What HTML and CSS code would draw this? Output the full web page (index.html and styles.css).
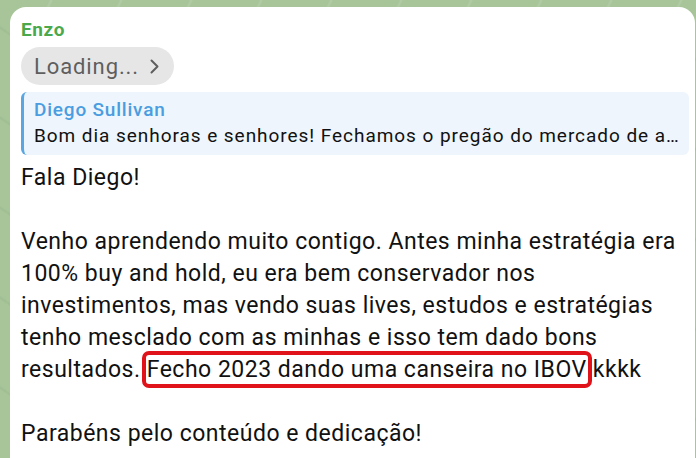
FILE: index.html
```html
<!DOCTYPE html>
<html lang="pt">
<head>
<meta charset="utf-8">
<link rel="stylesheet" href="styles.css">
</head>
<body>
<div class="bg">
  <div class="bubble">
    <div class="author">Enzo</div>
    <div class="pill"><span>Loading...</span><svg class="chev" width="9" height="15" viewBox="0 0 9 15"><polyline points="1.5,1.5 7.5,7.5 1.5,13.5" fill="none" stroke="#5e5e5e" stroke-width="2" stroke-linecap="round" stroke-linejoin="round"/></svg></div>
    <div class="quote">
      <div class="qname">Diego Sullivan</div>
      <div class="qtext">Bom dia senhoras e senhores! Fechamos o pregão do mercado de a…</div>
    </div>
    <div class="msg">
      <p>Fala Diego!</p>
      <p>Venho aprendendo muito contigo. Antes minha estratégia era<br>100% buy and hold, eu era bem conservador nos<br>investimentos, mas vendo suas lives, estudos e estratégias<br>tenho mesclado com as minhas e isso tem dado bons<br>resultados. <span class="hl">Fecho 2023 dando uma canseira no IBOV</span> kkkk</p>
      <p>Parabéns pelo conteúdo e dedicação!</p>
    </div>
  </div>
</div>
</body>
</html>
```
FILE: styles.css
```css
html, body {
  margin: 0;
  padding: 0;
}
body {
  width: 696px;
  height: 458px;
  overflow: hidden;
  background: #a8c59a;
  font-family: Roboto, "Noto Sans", sans-serif;
}
.bg {
  padding: 7px 1px 0 10px;
  height: 458px;
  box-sizing: border-box;
  background:
    linear-gradient(115deg, transparent 48%, rgba(255,255,255,0.12) 50%, transparent 52%) 0 0 / 70px 70px,
    linear-gradient(35deg, transparent 48%, rgba(80,120,70,0.10) 50%, transparent 52%) 0 0 / 50px 90px,
    #a8c59a;
}
.bubble {
  background: #ffffff;
  border-radius: 16px 16px 0 0;
  height: 100%;
  padding: 12px 6px 0 11px;
  box-sizing: border-box;
}
.author {
  color: #4aa94c;
  font-size: 19px;
  font-weight: 700;
  letter-spacing: 0.6px;
  line-height: 22px;
}
.pill {
  display: inline-flex;
  align-items: center;
  margin-top: 6px;
  height: 38px;
  padding: 0 15px 0 13px;
  background: #e6e6e6;
  border-radius: 19px;
  color: #5e5e5e;
  font-size: 22px;
  letter-spacing: 0.9px;
}
.chev {
  margin-left: 11px;
  display: block;
}
.quote {
  margin-top: 7px;
  background: #eef5fc;
  border-left: 3px solid #5aa6e2;
  border-radius: 6px;
  padding: 5px 8px 6px 10px;
}
.qname {
  color: #4a9de0;
  font-size: 19px;
  font-weight: 500;
  letter-spacing: 0.8px;
  line-height: 26px;
}
.qtext {
  color: #111;
  font-size: 19px;
  letter-spacing: 0.95px;
  line-height: 26px;
  white-space: nowrap;
  overflow: hidden;
}
.msg {
  margin-top: 7px;
  color: #111;
  font-size: 23px;
  letter-spacing: 0.5px;
  line-height: 32px;
}
.msg p {
  margin: 0 0 32px 0;
}
.hl {
  outline: 4px solid #e0131b;
  outline-offset: 1px;
  border-radius: 2px;
}
```
